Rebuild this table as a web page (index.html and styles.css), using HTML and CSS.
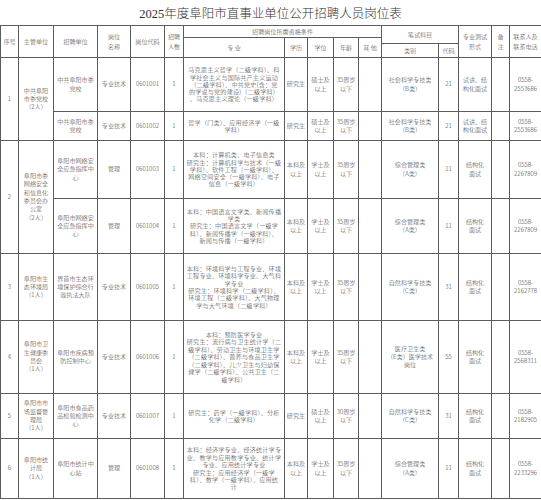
FILE: index.html
```html
<!DOCTYPE html>
<html lang="zh-CN">
<head>
<meta charset="utf-8">
<title>2025年度阜阳市直事业单位公开招聘人员岗位表</title>
<link rel="stylesheet" href="styles.css">
</head>
<body>
<div class="title">2025年度阜阳市直事业单位公开招聘人员岗位表</div>
<table class="jobs">
<colgroup>
<col class="c18"><col class="c35"><col class="c44"><col class="c33"><col class="c34"><col class="c19"><col class="c101"><col class="c23"><col class="c26"><col class="c25"><col class="c23"><col class="c57"><col class="c20"><col class="c33"><col class="c18"><col class="c32">
</colgroup>
<thead>
<tr class="h1">
<th rowspan="3">序号</th>
<th rowspan="3">主管单位</th>
<th rowspan="3">招聘单位</th>
<th rowspan="3">岗位<br>名称</th>
<th rowspan="3">岗位代码</th>
<th rowspan="3">招聘<br>人数</th>
<th colspan="5">招聘岗位所需资格条件</th>
<th colspan="2" rowspan="2">笔试科目</th>
<th rowspan="3">专业测试<br>形式</th>
<th rowspan="3">备<br>注</th>
<th rowspan="3">联系人及<br>联系电话</th>
</tr>
<tr class="h2">
<th rowspan="2">专 业</th>
<th rowspan="2">学历</th>
<th rowspan="2">学位</th>
<th rowspan="2">年龄</th>
<th rowspan="2">其 他</th>
</tr>
<tr class="h3">
<th>类别</th>
<th>代码</th>
</tr>
</thead>
<tbody>
<tr class="r1a">
<td rowspan="2">1</td>
<td rowspan="2">中共阜阳<br>市委党校<br>（2人）</td>
<td>中共阜阳市委<br>党校</td>
<td>专业技术</td>
<td>0601001</td>
<td>1</td>
<td class="major">马克思主义哲学（二级学科）、科<br>学社会主义与国际共产主义运动<br>（二级学科）、中共党史(含：党<br>的学说与党的建设)（二级学科）<br>、马克思主义理论（一级学科）</td>
<td>研究生</td>
<td>硕士及<br>以上</td>
<td>35周岁<br>以下</td>
<td></td>
<td>社会科学专技类<br>（B类）</td>
<td>21</td>
<td>试讲、结<br>构化面试</td>
<td></td>
<td>0558-<br>2553686</td>
</tr>
<tr class="r1b">
<td>中共阜阳市委<br>党校</td>
<td>专业技术</td>
<td>0601002</td>
<td>1</td>
<td class="major">哲学（门类）、应用经济学（一级<br>学科）</td>
<td>研究生</td>
<td>硕士及<br>以上</td>
<td>35周岁<br>以下</td>
<td></td>
<td>社会科学专技类<br>（B类）</td>
<td>21</td>
<td>试讲、结<br>构化面试</td>
<td></td>
<td>0558-<br>2553686</td>
</tr>
<tr class="r2a">
<td rowspan="2">2</td>
<td rowspan="2">阜阳市委<br>网络安全<br>和信息化<br>委员会办<br>公室<br>（2人）</td>
<td>阜阳市网络安<br>全应急指挥中<br>心</td>
<td>管理</td>
<td>0601003</td>
<td>1</td>
<td class="major">本科：计算机类、电子信息类<br>研究生：计算机科学与技术（一级<br>学科）、软件工程（一级学科）、<br>网络空间安全（一级学科）、电子<br>信息（一级学科）</td>
<td>本科及<br>以上</td>
<td>学士及<br>以上</td>
<td>35周岁<br>以下</td>
<td></td>
<td>综合管理类<br>（A类）</td>
<td>11</td>
<td>结构化<br>面试</td>
<td></td>
<td>0558-<br>2267809</td>
</tr>
<tr class="r2b">
<td>阜阳市网络安<br>全应急指挥中<br>心</td>
<td>管理</td>
<td>0601004</td>
<td>1</td>
<td class="major">本科：中国语言文学类、新闻传播<br>学类<br>研究生：中国语言文学（一级学<br>科）、新闻传播学（一级学科）、<br>新闻与传播（一级学科）</td>
<td>本科及<br>以上</td>
<td>学士及<br>以上</td>
<td>35周岁<br>以下</td>
<td></td>
<td>综合管理类<br>（A类）</td>
<td>11</td>
<td>结构化<br>面试</td>
<td></td>
<td>0558-<br>2267809</td>
</tr>
<tr class="r3">
<td>3</td>
<td>阜阳市生<br>态环境局<br>（1人）</td>
<td>界首市生态环<br>境保护综合行<br>政执法大队</td>
<td>专业技术</td>
<td>0601005</td>
<td>1</td>
<td class="major">本科：环境科学与工程专业、环境<br>工程专业、环境科学专业、大气科<br>学专业<br>研究生：环境科学（二级学科）、<br>环境工程（二级学科）、大气物理<br>学与大气环境（二级学科）</td>
<td>本科及<br>以上</td>
<td>学士及<br>以上</td>
<td>35周岁<br>以下</td>
<td></td>
<td>自然科学专技类<br>（C类）</td>
<td>31</td>
<td>结构化<br>面试</td>
<td></td>
<td>0558-<br>2162778</td>
</tr>
<tr class="r4">
<td>4</td>
<td>阜阳市卫<br>生健康委<br>员会<br>（1人）</td>
<td>阜阳市疾病预<br>防控制中心</td>
<td>专业技术</td>
<td>0601006</td>
<td>1</td>
<td class="major">本科：预防医学专业<br>研究生：流行病与卫生统计学（二<br>级学科）、劳动卫生与环境卫生学<br>（二级学科）、营养与食品卫生学<br>（二级学科）、儿少卫生与妇幼保<br>健学（二级学科）、公共卫生（二<br>级学科）</td>
<td>本科及<br>以上</td>
<td>学士及<br>以上</td>
<td>35周岁<br>以下</td>
<td></td>
<td>医疗卫生类<br>（E类）医学技术<br>岗位</td>
<td>55</td>
<td>结构化<br>面试</td>
<td></td>
<td>0558-<br>2568311</td>
</tr>
<tr class="r5">
<td>5</td>
<td>阜阳市市<br>场监督管<br>理局<br>（1人）</td>
<td>阜阳市食品药<br>品检验检测中<br>心</td>
<td>专业技术</td>
<td>0601007</td>
<td>1</td>
<td class="major">研究生：药学（一级学科）、分析<br>化学（二级学科）</td>
<td>研究生</td>
<td>硕士及<br>以上</td>
<td>30周岁<br>以下</td>
<td></td>
<td>自然科学专技类<br>（C类）</td>
<td>31</td>
<td>结构化<br>面试</td>
<td></td>
<td>0558-<br>2182905</td>
</tr>
<tr class="r6">
<td>6</td>
<td>阜阳市统<br>计局<br>（1人）</td>
<td>阜阳市统计中<br>心站</td>
<td>管理</td>
<td>0601008</td>
<td>1</td>
<td class="major">本科：经济学专业、经济统计学专<br>业、数学与应用数学专业、统计学<br>专业、应用统计学专业<br>研究生：应用经济学（一级学<br>科）、数学（一级学科）、应用统<br>计</td>
<td>本科及<br>以上</td>
<td>学士及<br>以上</td>
<td>35周岁<br>以下</td>
<td></td>
<td>综合管理类<br>（A类）</td>
<td>11</td>
<td>结构化<br>面试</td>
<td></td>
<td>0558-<br>2233296</td>
</tr>
</tbody>
</table>
</body>
</html>
```
FILE: styles.css
```css
html, body {
  margin: 0;
  padding: 0;
  background: #ffffff;
}

body {
  font-family: "Noto Sans CJK SC", sans-serif;
  color: #3a3a3a;
}

.title {
  height: 25px;
  display: flex;
  align-items: center;
  justify-content: center;
  font-family: "Liberation Serif", "Noto Sans CJK SC", serif;
  font-size: 12.5px;
  font-weight: 300;
  color: #333333;
}

.jobs {
  border-collapse: collapse;
  table-layout: fixed;
  width: 541px;
  font-size: 6.1px;
  font-weight: 300;
  line-height: 8.3px;
}

.jobs th,
.jobs td {
  border: 1px solid #5c5c5c;
  padding: 0 1px;
  text-align: center;
  vertical-align: middle;
  font-weight: 300;
  white-space: nowrap;
  overflow: hidden;
}

.jobs th {
  line-height: 9.5px;
}

.jobs td.major {
  line-height: 7.4px;
  letter-spacing: 0.2px;
}

.c18 { width: 18px; }
.c35 { width: 35px; }
.c44 { width: 44px; }
.c33 { width: 33px; }
.c34 { width: 34px; }
.c19 { width: 19px; }
.c101 { width: 101px; }
.c23 { width: 23px; }
.c26 { width: 26px; }
.c25 { width: 25px; }
.c57 { width: 57px; }
.c20 { width: 20px; }
.c32 { width: 32px; }

.h1 { height: 12px; }
.h2 { height: 6px; }
.h3 { height: 14px; }

.r1a { height: 54px; }
.r1b { height: 29px; }
.r2a { height: 58px; }
.r2b { height: 55px; }
.r3 { height: 67px; }
.r4 { height: 73px; }
.r5 { height: 45px; }
.r6 { height: 60px; }

.r1a td.major { line-height: 7.2px; }
.r2a td.major { line-height: 7.2px; }
.r2b td.major { line-height: 7.2px; }
```
